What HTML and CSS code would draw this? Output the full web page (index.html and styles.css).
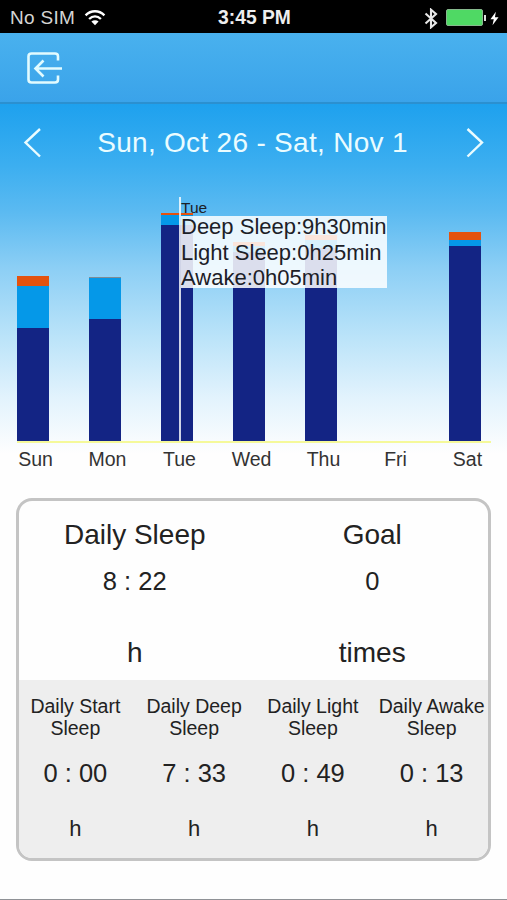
FILE: index.html
```html
<!DOCTYPE html>
<html lang="en">
<head>
  <meta charset="UTF-8" />
  <meta name="viewport" content="width=device-width, initial-scale=1" />
  <title>Sleep</title>
  <link rel="stylesheet" href="styles.css">
</head>
<body>
  <div class="status-bar">
    <div class="status-left">
      <span class="carrier">No SIM</span>
      <svg class="wifi" width="22" height="17" viewBox="0 0 22 17" fill="none" stroke="#fff" stroke-width="2.4">
        <path d="M1.6 6.3C7 .9 15 .9 20.4 6.3" />
        <path d="M5.1 10C8.6 6.7 13.4 6.7 16.9 10" />
        <path d="M11 16.2L7.4 12.5C9.5 10.7 12.5 10.7 14.6 12.5Z" fill="#fff" stroke="none" />
      </svg>
    </div>
    <span class="clock">3:45 PM</span>
    <div class="status-right">
      <svg width="14" height="21" viewBox="0 0 14 21" fill="none" stroke="#e8e8e8" stroke-width="2.1">
        <path d="M1.5 5.5L12 15L7 19.3V1.7L12 6L1.5 15.5" />
      </svg>
      <div class="battery"></div>
      <svg class="bolt" width="9" height="15" viewBox="0 0 10 15" fill="#fff">
        <path d="M6.5 0L.5 8.2H4.2L2.8 15L9.5 6.2H5.5Z" />
      </svg>
    </div>
  </div>

  <header class="nav-bar">
    <svg width="38" height="34" viewBox="0 0 38 34" fill="none" stroke="#e2fbff" stroke-width="2.6">
      <path d="M32 9.5V5.5Q32 2.5 29 2.5H5.5Q2.5 2.5 2.5 5.5V28.5Q2.5 31.5 5.5 31.5H29Q32 31.5 32 28.5V24.5" />
      <path d="M36 17.5H10M17.5 9.5L9.5 17.5L17.5 25.5" />
    </svg>
  </header>

  <section class="chart-panel">
    <div class="date-row">
      <svg width="20" height="32" viewBox="0 0 20 32" fill="none" stroke="#eafcff" stroke-width="2.4">
        <path d="M18 2L3.5 15.5L18 29.5" />
      </svg>
      <span class="date-range">Sun, Oct 26 - Sat, Nov 1</span>
      <svg width="20" height="32" viewBox="0 0 20 32" fill="none" stroke="#eafcff" stroke-width="2.4">
        <path d="M2.5 2L17 15.5L2.5 29.5" />
      </svg>
    </div>

    <div class="chart">
      <div class="bar">
        <div class="awake" style="height: 10px"></div>
        <div class="light" style="height: 42px"></div>
        <div class="deep" style="height: 113px"></div>
      </div>
      <div class="bar">
        <div class="awake faint" style="height: 1px"></div>
        <div class="light" style="height: 41px"></div>
        <div class="deep" style="height: 122px"></div>
      </div>
      <div class="bar">
        <div class="awake" style="height: 2px"></div>
        <div class="light" style="height: 10px"></div>
        <div class="deep" style="height: 216px"></div>
      </div>
      <div class="bar">
        <div class="awake" style="height: 4px"></div>
        <div class="light" style="height: 6px"></div>
        <div class="deep" style="height: 189px"></div>
      </div>
      <div class="bar">
        <div class="awake" style="height: 5px"></div>
        <div class="light" style="height: 8px"></div>
        <div class="deep" style="height: 193px"></div>
      </div>
      <div class="bar"></div>
      <div class="bar">
        <div class="awake" style="height: 8px"></div>
        <div class="light" style="height: 6px"></div>
        <div class="deep" style="height: 195px"></div>
      </div>

      <div class="marker"></div>
      <div class="tooltip">
        <div class="tooltip-day">Tue</div>
        <div class="tooltip-body">
          <p>Deep Sleep:9h30min</p>
          <p>Light Sleep:0h25min</p>
          <p>Awake:0h05min</p>
        </div>
      </div>
    </div>

    <div class="days">
      <span>Sun</span>
      <span>Mon</span>
      <span>Tue</span>
      <span>Wed</span>
      <span>Thu</span>
      <span>Fri</span>
      <span>Sat</span>
    </div>
  </section>

  <section class="card">
    <div class="summary">
      <div class="total">
        <h2>Daily Sleep</h2>
        <p class="value">8 : 22</p>
        <p class="total-unit">h</p>
      </div>
      <div class="total">
        <h2>Goal</h2>
        <p class="value">0</p>
        <p class="total-unit">times</p>
      </div>
    </div>
    <div class="details">
      <div class="detail">
        <h3>Daily Start<br>Sleep</h3>
        <p class="value">0 : 00</p>
        <p class="unit">h</p>
      </div>
      <div class="detail">
        <h3>Daily Deep<br>Sleep</h3>
        <p class="value">7 : 33</p>
        <p class="unit">h</p>
      </div>
      <div class="detail">
        <h3>Daily Light<br>Sleep</h3>
        <p class="value">0 : 49</p>
        <p class="unit">h</p>
      </div>
      <div class="detail">
        <h3>Daily Awake<br>Sleep</h3>
        <p class="value">0 : 13</p>
        <p class="unit">h</p>
      </div>
    </div>
  </section>
</body>
</html>
```
FILE: styles.css
```css
* {
  box-sizing: border-box;
  margin: 0;
  padding: 0;
}

body {
  width: 507px;
  height: 900px;
  overflow: hidden;
  display: flex;
  flex-direction: column;
  background: #fefefe;
  border-bottom: 1px solid #8f9296;
  color: #222;
  font-family: "Liberation Sans", Arial, sans-serif;
}

h2, h3 {
  font-weight: normal;
}

/* status bar */
.status-bar {
  flex: none;
  height: 33px;
  padding: 3px 8px 0 10px;
  display: grid;
  grid-template-columns: 1fr auto 1fr;
  align-items: center;
  background: #000;
  color: #fff;
  font-size: 19px;
}

.status-left, .status-right {
  display: flex;
  align-items: center;
}

.carrier {
  color: #d4d4d4;
  letter-spacing: 0.3px;
}

.wifi {
  margin: 0 0 2px 9px;
}

.clock {
  font-weight: bold;
  font-size: 19.3px;
  color: #eee;
}

.status-right {
  justify-content: flex-end;
}

.battery {
  position: relative;
  width: 37px;
  height: 17px;
  margin: 0 7px 1px 8px;
  background: #4fd964;
  border: 1px solid #86b98d;
  border-radius: 2px;
}

.battery::after {
  content: "";
  position: absolute;
  top: 5px;
  right: -4px;
  width: 2px;
  height: 6px;
  background: #ddd;
}

/* nav bar */
.nav-bar {
  flex: none;
  height: 71px;
  padding: 18px 0 0 26px;
  background: linear-gradient(#49b1ee, #3aa3ea);
  border-bottom: 2px solid #2b90d0;
}

/* chart */
.chart-panel {
  flex: none;
  height: 394px;
  background: linear-gradient(#1ea1ee 0, #3baef0 60px, #5bbaf1 108px, #8dcff5 165px, #bce4f9 235px, #e3f3fd 295px, #fefefe 350px);
}

.date-row {
  height: 78px;
  padding: 0 22px;
  display: flex;
  justify-content: space-between;
  align-items: center;
  color: #eafcff;
}

.date-range {
  margin-right: 2px;
  font-size: 28px;
  letter-spacing: 0.3px;
}

.chart {
  position: relative;
  width: 474px;
  height: 261px;
  margin-left: 17px;
  display: flex;
  align-items: flex-end;
  gap: 40px;
  border-bottom: 2px solid #f5f99a;
}

.bar {
  width: 32px;
}

.awake {
  background: #e4520e;
}

.faint {
  background: #7d8c96;
}

.light {
  background: #0598e8;
}

.deep {
  background: #132484;
}

.marker {
  position: absolute;
  left: 162px;
  top: 15px;
  bottom: 0;
  width: 2px;
  background: rgba(255, 255, 255, 0.8);
}

.tooltip {
  position: absolute;
  left: 164px;
  top: 17px;
  color: #1c2027;
}

.tooltip-day {
  font-size: 15.5px;
  line-height: 17px;
}

.tooltip-body {
  width: 206px;
  height: 72px;
  background: rgba(255, 255, 255, 0.85);
  font-size: 22px;
  line-height: 22px;
  white-space: nowrap;
}

.tooltip-body p {
  margin-bottom: 3.5px;
}

.days {
  display: grid;
  grid-template-columns: repeat(7, 72px);
  margin-left: -0.5px;
  padding-top: 4px;
  color: #333;
  font-size: 19.5px;
  line-height: 24px;
  text-align: center;
}

/* summary card */
.card {
  flex: none;
  width: 475px;
  height: 363px;
  margin-left: 16px;
  display: flex;
  flex-direction: column;
  overflow: hidden;
  border: 3px solid #c4c4c4;
  border-radius: 16px;
  text-align: center;
}

.summary {
  height: 179px;
  margin: 0 -3px;
  display: grid;
  grid-template-columns: 1fr 1fr;
}

.total h2 {
  padding-top: 18px;
  font-size: 28px;
  line-height: 32px;
}

.value {
  font-size: 25.5px;
  line-height: 30px;
}

.total .value {
  padding-top: 15px;
}

.total-unit {
  padding-top: 41px;
  font-size: 28px;
  line-height: 32px;
}

.details {
  flex: 1;
  margin: 0 -3px;
  padding-top: 15px;
  display: grid;
  grid-template-columns: repeat(4, 1fr);
  background: #eee;
}

.detail h3 {
  font-size: 19.5px;
  line-height: 22px;
  white-space: nowrap;
}

.detail .value {
  padding-top: 19px;
}

.unit {
  padding-top: 28px;
  font-size: 22px;
  line-height: 26px;
}
```
